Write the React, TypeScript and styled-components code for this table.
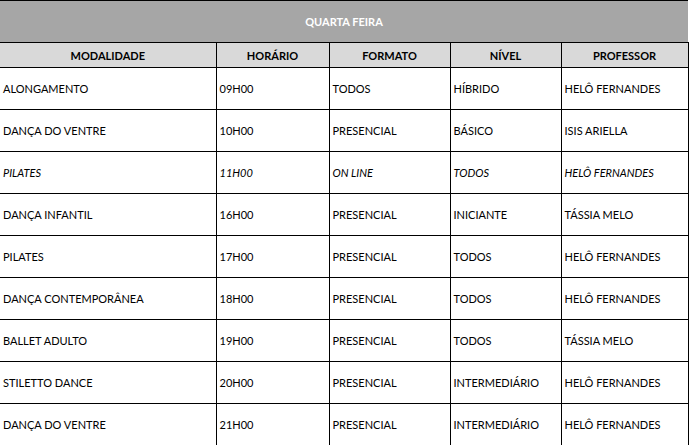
import styled, { createGlobalStyle } from "styled-components";

const GlobalStyle = createGlobalStyle`
  html, body {
    margin: 0;
    padding: 0;
    background: #ffffff;
  }
  body {
    font-family: Lato, "Liberation Sans", sans-serif;
  }
`;

type Row = {
  modalidade: string;
  horario: string;
  formato: string;
  nivel: string;
  professor: string;
  italic?: boolean;
};

const rows: Row[] = [
  { modalidade: "ALONGAMENTO", horario: "09H00", formato: "TODOS", nivel: "HÍBRIDO", professor: "HELÔ FERNANDES" },
  { modalidade: "DANÇA DO VENTRE", horario: "10H00", formato: "PRESENCIAL", nivel: "BÁSICO", professor: "ISIS ARIELLA" },
  { modalidade: "PILATES", horario: "11H00", formato: "ON LINE", nivel: "TODOS", professor: "HELÔ FERNANDES", italic: true },
  { modalidade: "DANÇA INFANTIL", horario: "16H00", formato: "PRESENCIAL", nivel: "INICIANTE", professor: "TÁSSIA MELO" },
  { modalidade: "PILATES", horario: "17H00", formato: "PRESENCIAL", nivel: "TODOS", professor: "HELÔ FERNANDES" },
  { modalidade: "DANÇA CONTEMPORÂNEA", horario: "18H00", formato: "PRESENCIAL", nivel: "TODOS", professor: "HELÔ FERNANDES" },
  { modalidade: "BALLET ADULTO", horario: "19H00", formato: "PRESENCIAL", nivel: "TODOS", professor: "TÁSSIA MELO" },
  { modalidade: "STILETTO DANCE", horario: "20H00", formato: "PRESENCIAL", nivel: "INTERMEDIÁRIO", professor: "HELÔ FERNANDES" },
  { modalidade: "DANÇA DO VENTRE", horario: "21H00", formato: "PRESENCIAL", nivel: "INTERMEDIÁRIO", professor: "HELÔ FERNANDES" },
];

const columns = [
  { label: "MODALIDADE", width: 216 },
  { label: "HORÁRIO", width: 113 },
  { label: "FORMATO", width: 121 },
  { label: "NÍVEL", width: 111 },
  { label: "PROFESSOR", width: 127 },
];

function App() {
  return (
    <>
      <GlobalStyle />
      <Schedule>
        <colgroup>
          {columns.map((c) => (
            <col key={c.label} style={{ width: c.width }} />
          ))}
        </colgroup>
        <thead>
          <TitleRow>
            <TitleCell colSpan={5}>QUARTA FEIRA</TitleCell>
          </TitleRow>
          <HeaderRow>
            {columns.map((c) => (
              <HeaderCell key={c.label}>{c.label}</HeaderCell>
            ))}
          </HeaderRow>
        </thead>
        <tbody>
          {rows.map((r, i) => (
            <DataRow key={i} $italic={r.italic}>
              <Cell>{r.modalidade}</Cell>
              <Cell>{r.horario}</Cell>
              <Cell>{r.formato}</Cell>
              <Cell>{r.nivel}</Cell>
              <Cell>{r.professor}</Cell>
            </DataRow>
          ))}
        </tbody>
      </Schedule>
    </>
  );
}

const Schedule = styled.table`
  width: 688px;
  border-collapse: collapse;
  table-layout: fixed;
  color: #000000;
  font-size: 11px;
`;

const TitleRow = styled.tr`
  height: 42px;
  background: #a6a6a6;
`;

const TitleCell = styled.th`
  padding: 0;
  border-top: 1px solid #000;
  border-bottom: 1px solid #000;
  color: #ffffff;
  font-weight: 700;
  text-align: center;
  vertical-align: middle;
`;

const HeaderRow = styled.tr`
  height: 25px;
  background: #d9d9d9;
`;

const HeaderCell = styled.th`
  padding: 0;
  border-left: 1px solid #000;
  border-bottom: 1px solid #000;
  font-weight: 700;
  text-align: center;
  vertical-align: middle;

  &:first-child {
    border-left: none;
  }
  &:last-child {
    border-right: 1px solid #000;
  }
`;

const DataRow = styled.tr<{ $italic?: boolean }>`
  height: 42px;
  font-style: ${(p) => (p.$italic ? "italic" : "normal")};
`;

const Cell = styled.td`
  padding: 0 0 0 3px;
  border-left: 1px solid #000;
  border-bottom: 1px solid #000;
  text-align: left;
  vertical-align: middle;
  white-space: nowrap;

  &:first-child {
    border-left: none;
  }
  &:last-child {
    border-right: 1px solid #000;
  }
`;

export default App;
